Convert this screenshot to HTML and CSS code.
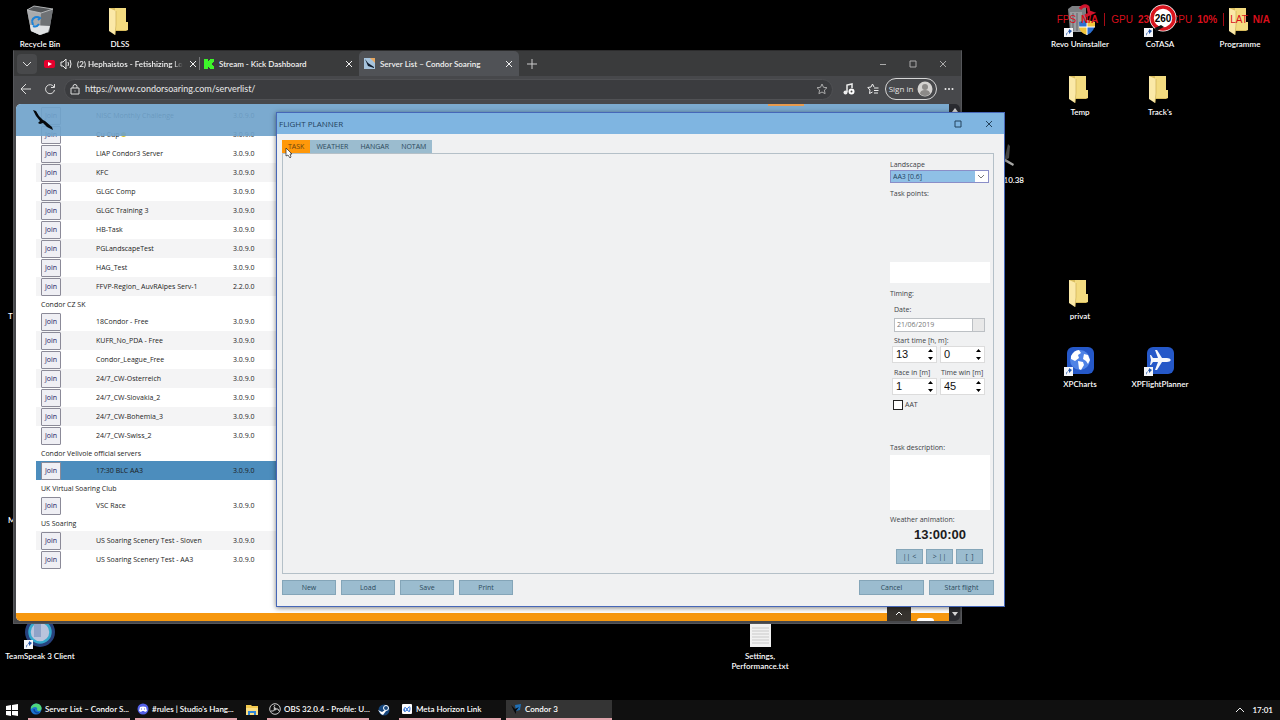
FILE: index.html
```html
<!DOCTYPE html>
<html lang="en">
<head>
  <meta charset="UTF-8">
  <meta name="viewport" content="width=device-width, initial-scale=1.0">
  <title>Desktop</title>
  <link rel="stylesheet" href="styles.css">
</head>
<body>
  <!-- shared icons -->
  <svg class="defs" aria-hidden="true">
    <symbol id="folder" viewBox="0 0 32 32">
      <path d="M5 4h17v14l2 1v7l-2 1H5z" fill="#d9bd5e"/>
      <path d="M11 4h11v14h2v8H11z" fill="#f3db80"/>
      <path d="M5 4l7 3v15l-1 9-6-4z" fill="#fbe9a8"/>
      <path d="M12 7v14l-1 10" fill="none" stroke="#cdb057" stroke-width=".7"/>
    </symbol>
    <symbol id="shortcut" viewBox="0 0 9 9">
      <path d="M0 0h9v9H0z" fill="#f4f6fa"/>
      <path d="M2 8C2 5 3 4 5 4V6l3-3-3-2v1" fill="#2456a8"/>
    </symbol>
    <symbol id="x" viewBox="0 0 10 10">
      <path d="M2 2l6 6M8 2L2 8" fill="none" stroke="currentColor"/>
    </symbol>
    <symbol id="condor" viewBox="0 0 24 24">
      <path d="M2 2l3 1 3 5 4 4 2 1 7 6 1 3-6-3-4-4-3 1-2-1 2-2-4-5z" fill="#05080c"/>
    </symbol>
  </svg>

  <div class="desktop">
    <a href="#" class="icon r1 c1">
      <svg viewBox="0 0 32 32">
        <path d="M3 6l7-4 19 3-4 23-9 3-9-4z" fill="#8c8f92"/>
        <path d="M3 6l14 3-1 22-9-4z" fill="#a9abad"/>
        <path d="M17 9l12-4-4 23-9 3z" fill="#6f7275"/>
        <path d="M3 6l7-4 19 3-12 4z" fill="#54575a" stroke="#c4c6c8" stroke-width=".8"/>
        <path d="M6 21l20 1-2 6-8 3-9-4z" fill="#dfe1e3"/>
        <path d="M8 17a5 5 0 0 1 8-3l-2 2M15 20a5 5 0 0 1-6 2M8 17l1 4" fill="none" stroke="#1d82d6" stroke-width="2"/>
      </svg>
      <span>Recycle Bin</span>
    </a>
    <a href="#" class="icon r1 c2"><svg><use href="#folder"/></svg><span>DLSS</span></a>
    <a href="#" class="icon r1 c14">
      <svg viewBox="0 0 32 32">
        <path d="M4 5l4-3h14v26H6z" fill="#7c7f82"/>
        <path d="M6 8h12v20H7z" fill="#9a9da0"/>
        <path d="M9 9v18M13 9v18" stroke="#606366"/>
        <path d="M16 5q4-5 8-2l1 5 3 1-7 3" fill="none" stroke="#d0142c" stroke-width="3"/>
        <path d="M15 18l8-2 8 2q0 10-8 13-8-3-8-13z" fill="#2c6fd0"/>
        <path d="M23 16v7h8q0-3 0-5zM15 23h8v8q-7-2-8-8z" fill="#f2c53c"/>
        <path d="M23 16v15M15 23h16" stroke="#fff"/>
        <use href="#shortcut" x="0" y="24" width="9" height="9"/>
      </svg>
      <span>Revo Uninstaller</span>
    </a>
    <a href="#" class="icon top r1 c15">
      <svg viewBox="0 0 32 32">
        <circle cx="19" cy="14" r="13.5" fill="#fff"/>
        <circle cx="19" cy="14" r="11" fill="#fff" stroke="#d8141e" stroke-width="3.5"/>
        <text x="19" y="18" text-anchor="middle" class="limit">260</text>
        <path d="M11 24l6-3 3 2-4 2-4 3z" fill="#111"/>
        <use href="#shortcut" x="0" y="24" width="9" height="9"/>
      </svg>
      <span>CoTASA</span>
    </a>
    <a href="#" class="icon r1 c16"><svg><use href="#folder"/></svg><span>Programme</span></a>
    <a href="#" class="icon r2 c14"><svg><use href="#folder"/></svg><span>Temp</span></a>
    <a href="#" class="icon r2 c15"><svg><use href="#folder"/></svg><span>Track's</span></a>
    <a href="#" class="icon end r3 c13">
      <svg viewBox="0 0 32 32">
        <path d="M24 4l2 2-1 12-5 3z" fill="#4a4b4a"/>
        <path d="M20 18l10 6-1 2-9-5z" fill="#a8a8a6"/>
      </svg>
      <span>10.38</span>
    </a>
    <a href="#" class="icon start r5 c1"><svg></svg><span>T</span></a>
    <a href="#" class="icon start r8 c1"><svg></svg><span>M</span></a>
    <a href="#" class="icon r5 c14"><svg><use href="#folder"/></svg><span>privat</span></a>
    <a href="#" class="icon r6 c14">
      <svg viewBox="0 0 32 32">
        <rect x="3" y="3" width="27" height="27" rx="6" fill="#2558c8"/>
        <circle cx="16" cy="16" r="10" fill="#4f83e6"/>
        <path d="M7 12q3-6 8-6l2 3-3 2 1 3-4 3-4-2zM14 17l5 1 1 3-3 5-2-1zM20 10l4 1 2 5-2 4-2-3-3-2z" fill="#fff"/>
        <use href="#shortcut" x="0" y="23" width="9" height="9"/>
      </svg>
      <span>XPCharts</span>
    </a>
    <a href="#" class="icon r6 c15">
      <svg viewBox="0 0 32 32">
        <rect x="3" y="3" width="27" height="27" rx="6" fill="#2558c8"/>
        <path d="M27 16q-1-2-4-2h-5L13 6h-2l3 8H9l-2-3H6l1 5-1 5h1l2-3h5l-3 8h2l5-8h5q3 0 4-2z" fill="#f6f8fc"/>
        <use href="#shortcut" x="0" y="23" width="9" height="9"/>
      </svg>
      <span>XPFlightPlanner</span>
    </a>
    <a href="#" class="icon r10 c1">
      <svg viewBox="0 0 32 32">
        <circle cx="16" cy="16" r="15" fill="#27417c"/>
        <circle cx="16" cy="16" r="10.5" fill="#b9c4dc" stroke="#35a9cc" stroke-width="2.5"/>
        <path d="M10 7h7v14h-7z" fill="#8fa3c8"/>
        <use href="#shortcut" x="0" y="24" width="9" height="9"/>
      </svg>
      <span>TeamSpeak 3 Client</span>
    </a>
    <a href="#" class="icon r10 c10">
      <svg viewBox="0 0 32 32">
        <path d="M6 2h21v29H6z" fill="#f1f1f1"/>
        <path d="M8 12h17M8 15h17M8 18h17M8 21h17M8 24h17M8 27h17" stroke="#c9c9c9"/>
      </svg>
      <span>Settings, Performance.txt</span>
    </a>
  </div>

  <div class="stats">
    <span>FPS</span><b>N/A</b><i></i>
    <span>GPU</span><b>23%</b><i></i>
    <span>CPU</span><b>10%</b><i></i>
    <span>LAT</span><b>N/A</b>
  </div>

  <div class="browser">
    <div class="tabstrip">
      <button class="tab-menu" aria-label="Tab actions"><svg width="10" height="10" viewBox="0 0 10 10"><path d="M1 3l4 4 4-4" fill="none" stroke="#ddd"/></svg></button>
      <div class="btab">
        <svg width="11" height="10" viewBox="0 0 11 10"><rect y="1" width="11" height="8" rx="2" fill="#e5002d"/><path d="M4 3l4 2-4 2z" fill="#fff"/></svg>
        <svg width="12" height="12" viewBox="0 0 12 12" fill="none" stroke="#eee"><path d="M1 4h2l3-3v10L3 8H1zM8 4q1 2 0 4M10 2q2 4 0 8"/></svg>
        <span class="title fade">(2) Hephaistos - Fetishizing Lo</span>
        <button aria-label="Close tab"><svg width="10" height="10"><use href="#x"/></svg></button>
      </div>
      <div class="btab ruled">
        <svg width="10" height="10" viewBox="0 0 10 10"><path d="M0 0h4v2h1V1h1V0h4v3H9v1H8v2h1v1h1v3H6V9H5V8H4v2H0z" fill="#3df52a"/></svg>
        <span class="title">Stream - Kick Dashboard</span>
        <button aria-label="Close tab"><svg width="10" height="10"><use href="#x"/></svg></button>
      </div>
      <div class="btab current">
        <svg width="11" height="11" viewBox="0 0 11 11"><path d="M0 0h11v11H0z" fill="#a6c3dc"/><path d="M6 0h5v5z" fill="#e7a860"/><path d="M1 1l3 4 6 4v1L4 8z" fill="#0d1a2c"/></svg>
        <span class="title">Server List – Condor Soaring</span>
        <button aria-label="Close tab"><svg width="10" height="10"><use href="#x"/></svg></button>
      </div>
      <button class="new-tab" aria-label="New tab"><svg width="12" height="12" viewBox="0 0 12 12"><path d="M6 1v10M1 6h10" stroke="#ccc"/></svg></button>
      <div class="win-controls">
        <button aria-label="Minimize"><svg width="8" height="8" viewBox="0 0 8 8"><path d="M1 4.5h6" stroke="currentColor"/></svg></button>
        <button aria-label="Maximize"><svg width="8" height="8" viewBox="0 0 8 8"><path d="M1 1h6v6H1z" fill="none" stroke="currentColor"/></svg></button>
        <button aria-label="Close"><svg width="10" height="10"><use href="#x"/></svg></button>
      </div>
    </div>
    <div class="toolbar">
      <button class="nav" aria-label="Back"><svg width="12" height="12" viewBox="0 0 12 12"><path d="M11 6H1M6 1L1 6l5 5" fill="none" stroke="#ddd"/></svg></button>
      <button class="nav" aria-label="Reload"><svg width="12" height="12" viewBox="0 0 12 12"><path d="M10 4a4.5 4.5 0 1 0 .5 3M10.5 1v3.5H7" fill="none" stroke="#ddd"/></svg></button>
      <div class="address">
        <svg width="10" height="11" viewBox="0 0 10 11"><path d="M1 4h8v6H1zM3 4V2.5a2 2 0 0 1 4 0V4M5 6.5v1" fill="none" stroke="#ddd"/></svg>
        <input type="text" aria-label="Address" value="https://www.condorsoaring.com/serverlist/">
        <svg width="12" height="12" viewBox="0 0 12 12"><path d="M6 1l1.500 3.300 3.500.4-2.600 2.400.7 3.600L6 9l-3.100 1.700.7-3.600L1 4.700l3.500-.4z" fill="none" stroke="#aaa"/></svg>
      </div>
      <button class="tool" aria-label="Media"><svg width="12" height="12" viewBox="0 0 12 12"><path d="M4 9V2l5-1v4" fill="none" stroke="#eee" stroke-width="1.5"/><circle cx="2.5" cy="9.5" r="2" fill="#eee"/><circle cx="8.5" cy="8.5" r="3" fill="#fff"/><circle cx="8.5" cy="8.5" r="1" fill="#444"/></svg></button>
      <button class="tool" aria-label="Favorites"><svg width="12" height="12" viewBox="0 0 12 12"><path d="M7 4L5.500 1 4 4 .8 4.500 3 7l-.5 3.500L5.500 9M7 5h4.500M7 7.500h4.500M7 10h4" fill="none" stroke="#eee"/></svg></button>
      <button class="signin">Sign in
        <svg width="16" height="16" viewBox="0 0 16 16"><circle cx="8" cy="8" r="7.5" fill="#d4d2d0"/><circle cx="8" cy="6" r="3" fill="#8c8a88"/><path d="M3 13q0-4 5-4t5 4q-5 4-10 0" fill="#8c8a88"/></svg>
      </button>
      <button class="tool" aria-label="More"><svg width="10" height="4" viewBox="0 0 10 4" fill="#eee"><circle cx="1.5" cy="2" r="1"/><circle cx="5" cy="2" r="1"/><circle cx="8.5" cy="2" r="1"/></svg></button>
    </div>

    <div class="viewport">
      <div class="page">
        <table class="servers">
          <tr><td><button>Join</button></td><td>NISC Monthly Challenge</td><td>3.0.9.0</td></tr>
          <tr><td><button>Join</button></td><td>Cu Cup <i class="sun"></i></td><td>3.0.9.0</td></tr>
          <tr><td><button>Join</button></td><td>LIAP Condor3 Server</td><td>3.0.9.0</td></tr>
          <tr class="alt"><td><button>Join</button></td><td>KFC</td><td>3.0.9.0</td></tr>
          <tr><td><button>Join</button></td><td>GLGC Comp</td><td>3.0.9.0</td></tr>
          <tr class="alt"><td><button>Join</button></td><td>GLGC Training 3</td><td>3.0.9.0</td></tr>
          <tr><td><button>Join</button></td><td>HB-Task</td><td>3.0.9.0</td></tr>
          <tr class="alt"><td><button>Join</button></td><td>PGLandscapeTest</td><td>3.0.9.0</td></tr>
          <tr><td><button>Join</button></td><td>HAG_Test</td><td>3.0.9.0</td></tr>
          <tr class="alt"><td><button>Join</button></td><td>FFVP-Region_ AuvRAlpes Serv-1</td><td>2.2.0.0</td></tr>
          <tr class="group"><th colspan="3">Condor CZ SK</th></tr>
          <tr><td><button>Join</button></td><td>18Condor - Free</td><td>3.0.9.0</td></tr>
          <tr class="alt"><td><button>Join</button></td><td>KUFR_No_PDA - Free</td><td>3.0.9.0</td></tr>
          <tr><td><button>Join</button></td><td>Condor_League_Free</td><td>3.0.9.0</td></tr>
          <tr class="alt"><td><button>Join</button></td><td>24/7_CW-Osterreich</td><td>3.0.9.0</td></tr>
          <tr><td><button>Join</button></td><td>24/7_CW-Slovakia_2</td><td>3.0.9.0</td></tr>
          <tr class="alt"><td><button>Join</button></td><td>24/7_CW-Bohemia_3</td><td>3.0.9.0</td></tr>
          <tr><td><button>Join</button></td><td>24/7_CW-Swiss_2</td><td>3.0.9.0</td></tr>
          <tr class="group"><th colspan="3">Condor Velivole official servers</th></tr>
          <tr class="selected"><td><button>Join</button></td><td>17:30 BLC AA3</td><td>3.0.9.0</td></tr>
          <tr class="group"><th colspan="3">UK Virtual Soaring Club</th></tr>
          <tr><td><button>Join</button></td><td>VSC Race</td><td>3.0.9.0</td></tr>
          <tr class="group"><th colspan="3">US Soaring</th></tr>
          <tr class="alt"><td><button>Join</button></td><td>US Soaring Scenery Test - Sloven</td><td>3.0.9.0</td></tr>
          <tr><td><button>Join</button></td><td>US Soaring Scenery Test - AA3</td><td>3.0.9.0</td></tr>
        </table>
        <div class="site-header"><svg width="24" height="24"><use href="#condor"/></svg></div>
        <div class="site-footer"><button aria-label="Back to top"><svg width="8" height="6" viewBox="0 0 8 6"><path d="M1 5l3-3 3 3" fill="none" stroke="#fff"/></svg></button><span></span></div>
      </div>
      <div class="scrollbar">
        <svg width="8" height="6" viewBox="0 0 8 6"><path d="M4 1l3 4H1z" fill="#d8d8d8"/></svg>
        <svg width="8" height="6" viewBox="0 0 8 6"><path d="M4 5L1 1h6z" fill="#d8d8d8"/></svg>
      </div>
    </div>
  </div>

  <div class="planner">
    <div class="titlebar">
      <span>FLIGHT PLANNER</span>
      <button aria-label="Maximize"><svg width="8" height="8" viewBox="0 0 8 8"><path d="M1 1h6v6H1z" fill="none" stroke="currentColor"/></svg></button>
      <button aria-label="Close"><svg width="10" height="10"><use href="#x"/></svg></button>
    </div>
    <div class="content">
      <div class="ptabs">
        <button class="active">TASK</button>
        <button>WEATHER</button>
        <button>HANGAR</button>
        <button>NOTAM</button>
      </div>
      <div class="panel">
        <form class="side">
          <label for="landscape">Landscape</label>
          <div class="combo">
            <select id="landscape"><option>AA3 [0.6]</option></select>
            <svg width="8" height="6" viewBox="0 0 8 6"><path d="M1 1l3 3 3-3" fill="none" stroke="#777"/></svg>
          </div>
          <label class="spaced" for="points">Task points:</label>
          <textarea class="points" id="points"></textarea>
          <div class="spaced">Timing:</div>
          <div class="timing">
            <label for="date">Date:</label>
            <div class="date"><input type="text" id="date" value="21/06/2019"><button type="button" aria-label="Pick date"></button></div>
            <label for="hour">Start time [h, m]:</label>
            <div class="pair">
              <div class="spin"><input type="number" id="hour" value="13"><svg width="7" height="13" viewBox="0 0 7 13"><path d="M3.5 1L6 4H1zM3.5 12L6 9H1z"/></svg></div>
              <div class="spin"><input type="number" aria-label="Start minute" value="0"><svg width="7" height="13" viewBox="0 0 7 13"><path d="M3.5 1L6 4H1zM3.5 12L6 9H1z"/></svg></div>
            </div>
            <div class="pair captions"><label for="race">Race in [m]</label><label for="win">Time win [m]</label></div>
            <div class="pair">
              <div class="spin"><input type="number" id="race" value="1"><svg width="7" height="13" viewBox="0 0 7 13"><path d="M3.5 1L6 4H1zM3.5 12L6 9H1z"/></svg></div>
              <div class="spin"><input type="number" id="win" value="45"><svg width="7" height="13" viewBox="0 0 7 13"><path d="M3.5 1L6 4H1zM3.5 12L6 9H1z"/></svg></div>
            </div>
            <label class="check"><input type="checkbox"> AAT</label>
          </div>
          <label for="desc">Task description:</label>
          <textarea class="desc" id="desc"></textarea>
          <div>Weather animation:</div>
          <div class="clock">13:00:00</div>
          <div class="play">
            <button type="button">|| &lt;</button>
            <button type="button">&gt; ||</button>
            <button type="button">[ &nbsp;]</button>
          </div>
        </form>
      </div>
      <div class="actions">
        <button>New</button>
        <button>Load</button>
        <button>Save</button>
        <button>Print</button>
        <span></span>
        <button class="wide">Cancel</button>
        <button class="wide">Start flight</button>
      </div>
    </div>
  </div>

  <svg class="cursor" width="8" height="12" viewBox="0 0 8 12"><path d="M1 1v8l2-1 2 3 1-1-1-3h2z" fill="#fff" stroke="#222" stroke-width=".7"/></svg>

  <div class="taskbar">
    <button class="start-btn" aria-label="Start"><svg width="12" height="12" viewBox="0 0 12 12"><path d="M0 2l5-1v5H0zM6 1l6-1v6H6zM0 7h5v5l-5-1zM6 7h6v5l-6-1z" fill="#fff"/></svg></button>
    <button class="task">
      <svg width="12" height="12" viewBox="0 0 12 12"><circle cx="6" cy="6" r="5.5" fill="#1b74d0"/><path d="M1 4q3-5 8-3 4 3 2 6-2 2-4 0 1-3-2-3-2 0-4 2z" fill="#4fd67a"/><path d="M4 6q0 4 5 4" fill="none" stroke="#0d4a9c" stroke-width="1.5"/></svg>
      <span>Server List – Condor S...</span>
    </button>
    <button class="task">
      <svg width="12" height="12" viewBox="0 0 12 12"><circle cx="6" cy="6" r="5.5" fill="#5360e8"/><path d="M3 4q3-1 6 0l1 4-2 1-1-1H5L4 9 2 8z" fill="#fff"/><path d="M4.5 5.500v1M7.500 5.500v1" stroke="#5360e8"/></svg>
      <span>#rules | Studio's Hang...</span>
    </button>
    <button class="pin" aria-label="File Explorer"><svg width="12" height="12" viewBox="0 0 12 12"><path d="M0 1h5l1 1h6v9H0z" fill="#f3c94e"/><path d="M0 4h12v7H0z" fill="#fbdf83"/><path d="M2 11V7h8v4H8V9H4v2z" fill="#2f86d6"/></svg></button>
    <button class="task">
      <svg width="12" height="12" viewBox="0 0 12 12" fill="none" stroke="#ccc"><circle cx="6" cy="6" r="5.3"/><path d="M6 6Q4 3 6 2M6 6q4-1 4 2M6 6Q5 9 2 8"/><circle cx="6" cy="6" r="1"/></svg>
      <span>OBS 32.0.4 - Profile: U...</span>
    </button>
    <button class="pin" aria-label="Steam"><svg width="12" height="12" viewBox="0 0 12 12"><circle cx="6" cy="6" r="5.5" fill="#16467c"/><circle cx="8" cy="4" r="2.5" fill="#16467c" stroke="#fff"/><path d="M0 6l4 2 3-2 1 1-3 4-2-1z" fill="#fff"/></svg></button>
    <button class="task">
      <svg width="12" height="12" viewBox="0 0 12 12"><rect x="1" y="1" width="10" height="10" rx="1" fill="#fff"/><path d="M3 8q0-5 2-3l2 3q2 2 2-2t-2-1L5 8Q3 10 3 6" fill="none" stroke="#2b6fd8"/></svg>
      <span>Meta Horizon Link</span>
    </button>
    <button class="task open">
      <svg width="12" height="12" viewBox="0 0 12 12"><path d="M5 2l6-1-1 6-4 1z" fill="#1f6fb6"/><path d="M1 2l4 4 4-2-3 4v3L4 8z" fill="#05080c"/></svg>
      <span>Condor 3</span>
    </button>
    <div class="tray"><svg width="10" height="8" viewBox="0 0 10 8"><path d="M1 6l4-4 4 4" fill="none" stroke="#eee"/></svg><span>17:01</span></div>
  </div>
</body>
</html>
```
FILE: styles.css
```css
* {
  box-sizing: border-box;
}
html, body {
  margin: 0;
  height: 100%;
  background: #000;
  overflow: hidden;
}
body {
  position: relative;
  font-family: "Open Sans", "Noto Sans", sans-serif;
  font-size: 8px;
  line-height: 10px;
  color: #fff;
}
button, input, select, textarea {
  font: inherit;
  color: inherit;
  margin: 0;
  padding: 0;
  border: none;
  border-radius: 0;
  background: none;
  outline: none;
}
button {
  display: flex;
  align-items: center;
  justify-content: center;
}
svg {
  flex: none;
  display: block;
}
.defs {
  position: absolute;
  width: 0;
  height: 0;
}

/* desktop icons */
.desktop {
  display: grid;
  grid-template-columns: repeat(16, 1fr);
  grid-template-rows: repeat(10, 68px);
}
.icon {
  display: flex;
  flex-direction: column;
  align-items: center;
  gap: 3px;
  padding: 4px 6px 0;
  color: #fff;
  text-decoration: none;
  text-align: center;
  font-family: Lato, sans-serif;
  font-weight: 600;
  position: relative;
}
.icon > svg {
  width: 32px;
  height: 32px;
  overflow: visible;
}
.icon span {
  margin: 0 -6px;
}
.icon.start {
  align-items: flex-start;
}
.icon.start span {
  margin: 0 2px;
}
.icon.end span {
  align-self: flex-end;
  margin: 0 10px;
}
.icon.top {
  z-index: 2;
}
.limit {
  font: bold 10px "Liberation Sans", sans-serif;
}
.r1 { grid-row: 1; }
.r2 { grid-row: 2; }
.r3 { grid-row: 3; }
.r5 { grid-row: 5; }
.r6 { grid-row: 6; }
.r8 { grid-row: 8; }
.r10 { grid-row: 10; }
.c1 { grid-column: 1; }
.c2 { grid-column: 2; }
.c10 { grid-column: 10; }
.c13 { grid-column: 13; }
.c14 { grid-column: 14; }
.c15 { grid-column: 15; }
.c16 { grid-column: 16; }

/* fps overlay */
.stats {
  position: absolute;
  z-index: 1;
  top: 13px;
  right: 10px;
  display: flex;
  align-items: center;
  gap: 5px;
  font: 10px/12px "Liberation Sans", sans-serif;
  color: #d80f1c;
}
.stats i {
  width: 1px;
  height: 13px;
  margin: 0 1px;
  background: #a80c16;
}

/* browser */
.browser {
  position: absolute;
  z-index: 3;
  left: 13px;
  right: 318px;
  top: 50px;
  bottom: 96px;
  display: flex;
  flex-direction: column;
  background: #47484b;
  border: 1px solid #55565a;
  border-top-color: #2c2c2d;
}
.tabstrip {
  display: flex;
  align-items: center;
  height: 25px;
  padding: 0 3px;
  background: #3a3b3c;
  color: #f2f2f2;
}
.tab-menu {
  width: 20px;
  height: 20px;
  border-radius: 4px;
  background: #48494b;
  margin-right: 2px;
}
.btab {
  display: flex;
  align-items: center;
  gap: 5px;
  width: 160px;
  height: 25px;
  padding: 0 5px;
  font-weight: 600;
  font-family: Lato, sans-serif;
}
.btab .title {
  flex: 1;
  white-space: nowrap;
}
.btab .fade {
  mask-image: linear-gradient(to right, #000 90%, transparent);
}
.btab.ruled {
  position: relative;
}
.btab.ruled::before {
  content: "";
  position: absolute;
  left: 0;
  top: 6px;
  bottom: 6px;
  width: 1px;
  background: #77787a;
}
.btab.current {
  background: #505256;
  border-radius: 5px 5px 0 0;
}
.new-tab {
  width: 26px;
  height: 20px;
}
.win-controls {
  display: flex;
  margin-left: auto;
  color: #aaa;
}
.win-controls button {
  width: 30px;
  height: 20px;
}
.toolbar {
  display: flex;
  align-items: center;
  height: 28px;
  padding-bottom: 2px;
  background: #47484b;
}
.nav {
  width: 24px;
  height: 20px;
}
.address {
  flex: 1;
  display: flex;
  align-items: center;
  gap: 5px;
  height: 21px;
  margin: 0 4px 0 2px;
  padding: 0 4px 0 5px;
  border-radius: 11px;
  border: 1px solid #505154;
  background: #3b3c3f;
}
.address input {
  flex: 1;
  min-width: 0;
  font-family: Lato, sans-serif;
  font-size: 9px;
  color: #eaeaea;
}
.tool {
  width: 24px;
  height: 20px;
}
.signin {
  gap: 4px;
  width: 52px;
  height: 22px;
  border: 1px solid #d6d6d6;
  border-radius: 11px;
  color: #e4e4e4;
}
.viewport {
  flex: 1;
  min-height: 0;
  display: flex;
  margin: 0 1px 2px 2px;
  border-radius: 5px;
  overflow: hidden;
}
.page {
  flex: 1;
  position: relative;
  background: #fff;
  overflow: hidden;
  color: #1c1c1c;
  font-size: 7px;
}
.servers {
  width: calc(100% - 20px);
  margin: 2px 0 0 20px;
  border-collapse: collapse;
  table-layout: fixed;
}
.servers td, .servers th {
  padding: 0;
  height: 19px;
  text-align: left;
  font-weight: 400;
  line-height: 9px;
  white-space: nowrap;
}
.servers th {
  height: 16px;
  padding-left: 5px;
}
.servers td:nth-child(1) {
  width: 60px;
  padding-left: 5px;
}
.servers td:nth-child(2) {
  width: 137px;
}
.servers button {
  width: 20px;
  height: 18px;
  border: 1px solid #8b8a98;
  border-radius: 1px;
  background: #efeff4;
  color: #1d1b66;
}
.servers .alt {
  background: #f4f4f5;
}
.servers .selected {
  background: #4c8dbd;
}
.sun {
  display: inline-block;
  width: 5px;
  height: 5px;
  border-radius: 50%;
  background: #d8c020;
}
.site-header {
  position: absolute;
  top: 0;
  left: 0;
  right: 0;
  height: 32px;
  padding: 4px 15px;
  background: rgba(112, 163, 203, 0.92);
}
.site-header::after {
  content: "";
  position: absolute;
  top: 0;
  right: 145px;
  width: 36px;
  height: 2px;
  background: #e89a4c;
}
.site-footer {
  position: absolute;
  left: 0;
  right: 0;
  bottom: 0;
  height: 8px;
  display: flex;
  align-items: flex-end;
  justify-content: flex-end;
  gap: 6px;
  padding-right: 15px;
  background: #f7980f;
}
.site-footer button {
  width: 24px;
  height: 16px;
  background: #37332f;
}
.site-footer span {
  width: 17px;
  height: 3px;
  border-radius: 3px 3px 0 0;
  background: #fff;
}
.scrollbar {
  width: 11px;
  display: flex;
  flex-direction: column;
  justify-content: space-between;
  align-items: center;
  padding: 3px 0 4px;
  background: #2a2b30;
}

/* flight planner */
.planner {
  position: absolute;
  z-index: 4;
  left: 276px;
  right: 275px;
  top: 112px;
  bottom: 113px;
  display: flex;
  flex-direction: column;
  border: 1px solid #4667b8;
  background: #f0f1f2;
  color: #3c4146;
  box-shadow: 0 1px 5px rgba(0, 0, 0, 0.5);
}
.titlebar {
  display: flex;
  align-items: center;
  height: 21px;
  padding-left: 2px;
  background: #7fb5e1;
  color: #24435c;
}
.titlebar span {
  flex: 1;
}
.titlebar button {
  width: 31px;
  height: 20px;
}
.content {
  flex: 1;
  min-height: 0;
  display: flex;
  flex-direction: column;
  padding: 6px 10px 11px 5px;
  font-size: 7px;
}
.ptabs {
  display: flex;
}
.ptabs button {
  height: 13px;
  padding: 0 6px;
  background: #9bbccf;
  color: #2c4a5c;
}
.ptabs .active {
  background: #ff980a;
  color: #6b4410;
}
.panel {
  flex: 1;
  min-height: 0;
  display: flex;
  justify-content: flex-end;
  padding: 6px 3px 0 0;
  border: 1px solid #b4c0c8;
}
.side {
  width: 100px;
}
.side label {
  display: block;
}
.side .spaced {
  margin-top: 6px;
}
.combo {
  position: relative;
  display: flex;
  width: 99px;
  height: 13px;
  border: 1px solid #8a8ec8;
  background: #fff;
}
.combo select {
  appearance: none;
  flex: 1;
  margin-right: 13px;
  padding-left: 2px;
  background: #8fc0e6;
  color: #24435c;
}
.combo svg {
  position: absolute;
  right: 3px;
  top: 3px;
}
.side textarea {
  display: block;
  width: 100%;
  background: #fff;
  resize: none;
}
.side .points {
  height: 21px;
  margin-top: 63px;
}
.timing {
  padding: 6px 5px 33px 2px;
}
.timing > label {
  padding-left: 2px;
}
.date {
  display: flex;
  height: 14px;
  margin: 3px 0 4px 2px;
  border: 1px solid #bcc0c4;
}
.date input {
  flex: 1;
  min-width: 0;
  padding-left: 2px;
  background: #fff;
  color: #777;
}
.date button {
  width: 12px;
  border-left: 1px solid #bcc0c4;
  background: #e8e8e8;
}
.pair {
  display: grid;
  grid-template-columns: 1fr 1fr;
  gap: 3px;
}
.captions {
  padding-left: 2px;
  margin-top: 5px;
  white-space: nowrap;
}
.spin {
  display: flex;
  align-items: center;
  min-width: 0;
  height: 17px;
  padding: 0 2px 0 3px;
  border: 1px solid #dcdcdc;
  background: #fff;
}
.spin input {
  appearance: textfield;
  flex: 1;
  width: 0;
  min-width: 0;
  font: 11px/13px "Liberation Sans", sans-serif;
  color: #111;
}
.spin input::-webkit-inner-spin-button {
  display: none;
}
.timing .check {
  display: flex;
  align-items: center;
  gap: 2px;
  margin-top: 5px;
  padding-left: 1px;
}
.check input {
  appearance: none;
  width: 10px;
  height: 10px;
  border: 1px solid #222;
  background: #fff;
}
.side .desc {
  height: 55px;
  margin: 2px 0 5px;
}
.clock {
  margin-top: 3px;
  text-align: center;
  font: bold 13px/14px "Liberation Sans", sans-serif;
  color: #1c1c1c;
}
.play {
  display: flex;
  gap: 3px;
  margin: 7px 0 0 6px;
}
.play button, .actions button {
  height: 15px;
  border: 1px solid #84a5b8;
  background: #9bbccf;
  color: #2c4a5c;
}
.play button {
  width: 27px;
}
.actions {
  display: flex;
  gap: 5px;
  margin-top: 6px;
}
.actions button {
  width: 54px;
}
.actions span {
  flex: 1;
}
.actions .wide {
  width: 65px;
}

.cursor {
  position: absolute;
  z-index: 5;
  left: 285px;
  top: 147px;
}

/* taskbar */
.taskbar {
  position: absolute;
  z-index: 6;
  left: 0;
  right: 0;
  bottom: 0;
  height: 20px;
  display: flex;
  gap: 5px;
  background: #101010;
  font-family: Lato, sans-serif;
  font-weight: 600;
}
.start-btn {
  width: 23px;
}
.task {
  justify-content: flex-start;
  gap: 3px;
  width: 102px;
  padding: 0 2px;
  border-bottom: 2px solid #e0a3ab;
  white-space: nowrap;
}
.task.open {
  width: 106px;
  padding-left: 4px;
  background: #343434;
}
.pin {
  width: 20px;
}
.tray {
  display: flex;
  align-items: center;
  gap: 7px;
  margin-left: auto;
  padding-right: 7px;
}
```
